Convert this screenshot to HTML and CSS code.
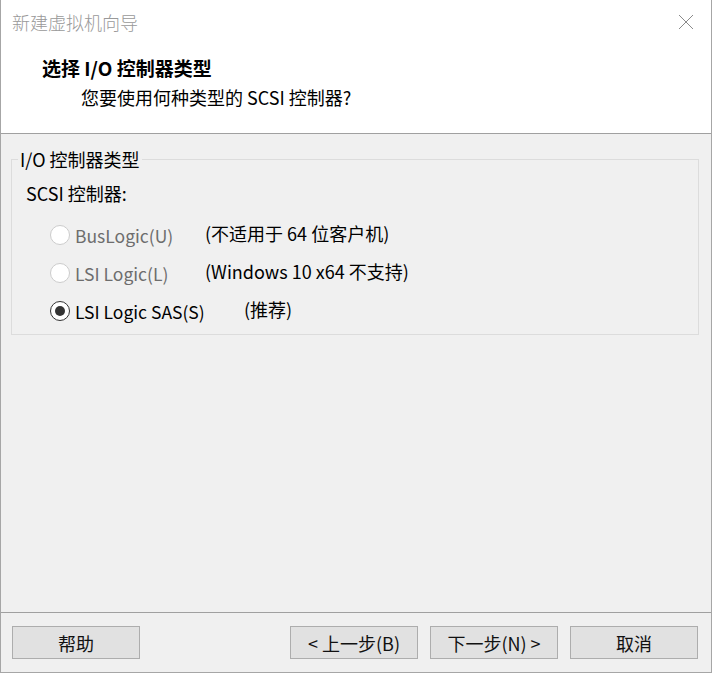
FILE: index.html
```html
<!DOCTYPE html>
<html lang="zh-CN">
<head>
<meta charset="utf-8">
<title>新建虚拟机向导</title>
<link rel="stylesheet" href="styles.css">
</head>
<body>
<div class="window">
  <div class="titlebar">
    <span class="title-text">新建虚拟机向导</span>
    <svg class="close" width="16" height="16" viewBox="0 0 16 16"><path d="M1 1 L15 15 M15 1 L1 15" stroke="#8a8a8a" stroke-width="1" fill="none"/></svg>
  </div>
  <div class="header">
    <div class="h-title">选择 I/O 控制器类型</div>
    <div class="h-sub">您要使用何种类型的 SCSI 控制器?</div>
  </div>
  <div class="content">
    <fieldset class="group">
      <legend class="group-label">I/O 控制器类型</legend>
      <div class="scsi-label">SCSI 控制器:</div>
      <div class="row">
        <span class="radio disabled"></span>
        <span class="r-label disabled">BusLogic(U)</span>
        <span class="r-desc">(不适用于 64 位客户机)</span>
      </div>
      <div class="row">
        <span class="radio disabled"></span>
        <span class="r-label disabled">LSI Logic(L)</span>
        <span class="r-desc">(Windows 10 x64 不支持)</span>
      </div>
      <div class="row">
        <span class="radio checked"></span>
        <span class="r-label">LSI Logic SAS(S)</span>
        <span class="r-desc rec">(推荐)</span>
      </div>
    </fieldset>
  </div>
  <div class="footer">
    <button class="btn">帮助</button>
    <div class="spacer"></div>
    <button class="btn">&lt; 上一步(B)</button>
    <button class="btn">下一步(N) &gt;</button>
    <button class="btn">取消</button>
  </div>
</div>
</body>
</html>
```
FILE: styles.css
```css
html, body {
  margin: 0;
  padding: 0;
  background: #f0f0f0;
}
body {
  font-family: "Noto Sans CJK SC", "Noto Sans", sans-serif;
  font-size: 18px;
  color: #000;
}
.window {
  width: 712px;
  height: 673px;
  box-sizing: border-box;
  border: 1px solid #a6a6a6;
  border-top: none;
  display: flex;
  flex-direction: column;
  background: #f0f0f0;
}
.titlebar {
  height: 44px;
  flex: none;
  background: #fff;
  display: flex;
  align-items: center;
  justify-content: space-between;
  padding: 0 17px 0 11px;
}
.title-text {
  color: #999;
  font-size: 18px;
  font-weight: 300;
  line-height: 1;
}
.close {
  display: block;
}
.header {
  height: 89px;
  flex: none;
  background: #fff;
  border-bottom: 1px solid #a0a0a0;
  padding-left: 41px;
}
.h-title {
  font-size: 19px;
  font-weight: 700;
  line-height: 24px;
  margin-top: 12px;
}
.h-sub {
  margin-left: 39px;
  line-height: 24px;
  margin-top: 5px;
}
.content {
  flex: 1;
  padding: 0 12px 0 10px;
}
.group {
  margin: 15px 0 0 0;
  padding: 12px 0 0 14px;
  border: 1px solid #dcdcdc;
  height: 186px;
  box-sizing: border-box;
}
.group-label {
  padding: 0 2px;
  margin-left: -8px;
  line-height: 20px;
}
.scsi-label {
  line-height: 24px;
  margin-bottom: 11px;
}
.row {
  display: flex;
  align-items: center;
  height: 38px;
}
.radio {
  width: 20px;
  height: 20px;
  box-sizing: border-box;
  border-radius: 50%;
  border: 1px solid #333;
  background: #fff;
  margin-left: 24px;
  margin-right: 5px;
  position: relative;
  flex: none;
}
.radio.disabled {
  border-color: #cccccc;
}
.radio.checked::after {
  content: "";
  position: absolute;
  left: 4px;
  top: 4px;
  width: 10px;
  height: 10px;
  border-radius: 50%;
  background: #333;
}
.r-label {
  width: 130px;
  flex: none;
  font-size: 17.5px;
  line-height: 22px;
  margin-top: 2px;
}
.r-label.disabled {
  color: #6d6d6d;
}
.r-desc {
  line-height: 22px;
  margin-top: -4px;
}
.r-desc.rec {
  margin-left: 39px;
}
.footer {
  height: 60px;
  flex: none;
  box-sizing: border-box;
  border-top: 1px solid #a0a0a0;
  display: flex;
  align-items: flex-start;
  padding: 13px 13px 0 11px;
  gap: 12px;
}
.spacer {
  flex: 1;
}
.btn {
  width: 128px;
  height: 33px;
  box-sizing: border-box;
  background: #e1e1e1;
  border: 1px solid #adadad;
  font-family: "Noto Sans CJK SC", "Noto Sans", sans-serif;
  font-size: 18px;
  color: #111;
  padding: 0;
  margin: 0;
  line-height: 1;
}
```
